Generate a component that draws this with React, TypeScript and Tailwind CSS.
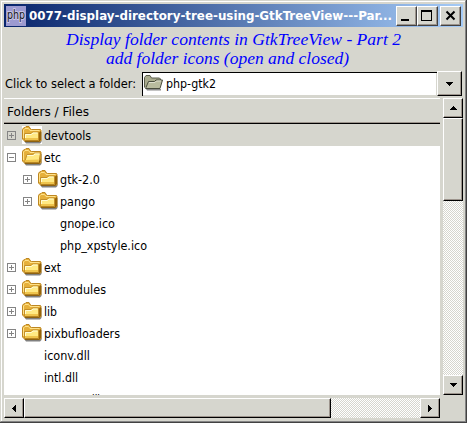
import React from "react";

const ui = "font-['DejaVu_Sans_Condensed','DejaVu_Sans',sans-serif]";

type Node = { name: string; depth: number; kind: "closed" | "open" | "file"; width: number };

const rows: Node[] = [
  { name: "devtools", depth: 0, kind: "closed", width: 47 },
  { name: "etc", depth: 0, kind: "open", width: 17 },
  { name: "gtk-2.0", depth: 1, kind: "closed", width: 40 },
  { name: "pango", depth: 1, kind: "closed", width: 35 },
  { name: "gnope.ico", depth: 1, kind: "file", width: 55 },
  { name: "php_xpstyle.ico", depth: 1, kind: "file", width: 87 },
  { name: "ext", depth: 0, kind: "closed", width: 17 },
  { name: "immodules", depth: 0, kind: "closed", width: 62 },
  { name: "lib", depth: 0, kind: "closed", width: 13 },
  { name: "pixbufloaders", depth: 0, kind: "closed", width: 76 },
  { name: "iconv.dll", depth: 0, kind: "file", width: 46 },
  { name: "intl.dll", depth: 0, kind: "file", width: 34 },
  { name: "msvcrun.dll", depth: 0, kind: "file", width: 56 },
];

/* Text fitted to a fixed advance width, drawn on a given baseline. */
function Label({ text, width, height, baseline, className }: { text: string; width: number; height: number; baseline: number; className: string }) {
  return (
    <svg width={width + 4} height={height} className="shrink-0 overflow-visible">
      <text x={0} y={baseline} textLength={width} lengthAdjust="spacingAndGlyphs" className={className}>{text}</text>
    </svg>
  );
}

function Folder({ open = false }: { open?: boolean }) {
  return (
    <svg width="20" height="18" viewBox="0 0 20 18" className="shrink-0">
      <path d="M2 15h17.500v1L18 17.500H4z" fill="#808080" />
      <path d="M19 6h1v9l-1 1z" fill="#b8b8b8" />
      <path d="M.5 3.500 1.500 2 3 1.500 4 .5h3L8.500 3l1 .5h9l.5 1v10l-1 1H3L.5 13z" fill="#e6b03a" stroke="#bd8722" />
      <path d="M1.500 12V4L3 2.500h3.500L8 4.500h9.500" fill="none" stroke="#ffe28a" />
      {open ? (
        <>
          <path d="m2.500 14.500 2.500-8 6-.2 1.500-1.300h6l-1.500 8.500-1 1z" fill="#ffe983" stroke="#c4902a" />
          <path d="m5 8 .5-.5h6l1.500-1.500h4.500" fill="none" stroke="#fffcd6" />
          <path d="m3.500 12 13-.500-.5 2.500H3z" fill="#efc44c" />
          <path d="m16.500 14.500 2-4v3.500l-1 1z" fill="#8b5c06" />
        </>
      ) : (
        <>
          <path d="M2.500 14.500v-7H9L10.500 6H16.500v8.500z" fill="#ffe983" stroke="#c48f28" />
          <path d="M3.500 13V8.500h6L11 7h4.500" fill="none" stroke="#fffcd6" />
          <path d="M3 12h13v2H3z" fill="#efc44c" />
          <path d="M17 6.500 19 5v9l-1 1h-1z" fill="#976408" />
        </>
      )}
      <path d="M3 15.300h14.500" stroke="#7c530b" strokeWidth=".9" />
    </svg>
  );
}

function Expander({ open }: { open: boolean }) {
  return (
    <svg width="9" height="9" shapeRendering="crispEdges" className="shrink-0">
      <path d="M.5.5h8v8h-8zM2 4.500h5" fill="none" stroke="#848484" />
      {!open && <path d="M4.500 2v5" stroke="#848484" />}
    </svg>
  );
}

const raised = "flex shrink-0 items-center justify-center border-t border-l border-r border-b border-t-white border-l-white border-r-black border-b-black bg-[#d6d6ce] shadow-[inset_-1px_-1px_0_#9c948c]";
const titleButton = "flex h-[20px] w-[21px] shrink-0 items-center justify-center border-t border-l border-r border-b border-t-white border-l-white border-r-[#424242] border-b-[#424242] bg-[#d6d6ce] shadow-[inset_-1px_-1px_0_#9c948c]";

function Arrow({ dir }: { dir: "up" | "down" | "left" | "right" }) {
  const d = {
    up: "M3 0h1v1h1v1h1v1h1v1H0V3h1V2h1V1h1z",
    down: "M0 0h7v1H6v1H5v1H4v1H3V3H2V2H1V1H0z",
    left: "M3 0h1v7H3V6H2V5H1V4H0V3h1V2h1V1h1z",
    right: "M0 0h1v1h1v1h1v1h1v1H3v1H2v1H1v1H0z",
  }[dir];
  const flat = dir === "up" || dir === "down";
  return <svg width={flat ? 7 : 4} height={flat ? 4 : 7} shapeRendering="crispEdges"><path d={d} /></svg>;
}

const track = "bg-[repeating-conic-gradient(#d6d6ce_0_25%,#fff_0_50%)] bg-[length:2px_2px]";
const heading = "fill-[#0000ff] font-['Liberation_Serif',serif] text-[17px] italic";

export default function App() {
  return (
    <div className={`${ui} flex h-[423px] w-[467px] flex-col overflow-hidden border-r border-b border-[#424242] bg-[#d6d6ce] text-black`}>
      <div className="flex h-[422px] w-[466px] flex-col border-t border-l border-r border-b border-t-[#d6d6ce] border-l-[#d6d6ce] border-r-[#848484] border-b-[#848484]">
        <div className="flex h-[420px] w-[464px] flex-col border-t border-l border-white pt-[2px] pl-[2px]">
          <header className="flex h-[23px] w-[459px] shrink-0 items-center bg-linear-to-r/srgb from-[#08246b] to-[#a5cbf7] pl-[2px]">
            <svg width="20" height="20" className="mr-[3px] shrink-0 overflow-visible">
              <path d="M0 0h20v20H0z" fill="#9c9ad0" />
              <text x="1" y="13" textLength="18" lengthAdjust="spacingAndGlyphs" stroke="#c9c6e8" strokeWidth="2" paintOrder="stroke" className="fill-[#181818] font-['DejaVu_Sans'] text-[12px]">php</text>
            </svg>
            <Label text="0077-display-directory-tree-using-GtkTreeView---Par..." width={363} height={20} baseline={14} className="fill-white text-[12px] font-bold" />
            <div className={titleButton}><svg width="15" height="14" shapeRendering="crispEdges"><path d="M2 10h8v2H2z" /></svg></div>
            <div className={titleButton}><svg width="15" height="14" shapeRendering="crispEdges"><path d="M1 1h11v11H1zM2 3v8h9V3z" fillRule="evenodd" /></svg></div>
            <div className={`${titleButton} ml-[2px]`}><svg width="15" height="14"><path d="m3.500 2.500 8 8m0-8-8 8" stroke="#000" strokeWidth="2" /></svg></div>
          </header>
          <div className="flex h-[44px] shrink-0 flex-col pt-[3px] pl-[62px]">
            <Label text="Display folder contents in GtkTreeView - Part 2" width={335} height={19} baseline={15} className={heading} />
            <div className="flex pl-[40px]">
              <Label text="add folder icons (open and closed)" width={243} height={19} baseline={15} className={heading} />
            </div>
          </div>
          <div className="flex h-[25px] shrink-0 pl-px">
            <div className="w-[137px] shrink-0"><Label text="Click to select a folder:" width={131} height={25} baseline={17} className="text-[12px]" /></div>
            <div className="mt-px flex h-[24px] w-[295px] shrink-0 items-start border-t border-l border-black bg-white shadow-[inset_-1px_-1px_0_#d6d6ce]">
              <svg width="23" height="20" className="shrink-0">
                <path d="M3 16h15v1.500H4z" fill="#8a8a8a" />
                <path d="M1.500 14.500v-10L3 2.500h4L8.500 5h8l1 1v3" fill="#a9ab8d" stroke="#5a5d4c" />
                <path d="m2.500 15.500 3-7h6L13 7h6.500l-2.500 8.500z" fill="#b9bb9e" stroke="#4a4d3e" />
                <path d="M6 9.500h6L13.500 8H18" fill="none" stroke="#dfe0cf" />
              </svg>
              <Label text="php-gtk2" width={50} height={22} baseline={15} className="text-[12px]" />
            </div>
            <div className={`${raised} h-[25px] w-[25px]`}><Arrow dir="down" /></div>
          </div>
          <main className="flex h-[299px] shrink-0 gap-[3px] pt-[2px]">
            <section className="h-[297px] w-[436px] overflow-hidden bg-white">
              <div className="flex h-[26px] border-t border-b border-t-white border-b-black bg-[#d6d6ce] pl-[3px] shadow-[inset_0_-1px_0_#9c948c]">
                <Label text="Folders / Files" width={82} height={24} baseline={17} className="text-[12px]" />
              </div>
              {rows.map((row, i) => (
                <div key={row.name} className={`flex h-[22px] items-center pl-[3px] ${i === 0 ? "bg-[#d6d6ce]" : ""}`}>
                  {row.depth === 1 && <span className="w-[16px] shrink-0" />}
                  <span className="flex w-[15px] shrink-0">{row.kind !== "file" && <Expander open={row.kind === "open"} />}</span>
                  <span className={`mr-[2px] flex w-[20px] shrink-0 ${i === 0 ? "bg-white" : ""}`}>{row.kind !== "file" && <Folder open={row.kind === "open"} />}</span>
                  <Label text={row.name} width={row.width} height={22} baseline={16} className="text-[12px]" />
                </div>
              ))}
            </section>
            <div className={`flex h-[297px] w-[20px] flex-col ${track}`}>
              <div className={`${raised} h-[20px]`}><Arrow dir="up" /></div>
              <div className={`${raised} h-[83px]`} />
              <div className="grow" />
              <div className={`${raised} h-[20px]`}><Arrow dir="down" /></div>
            </div>
          </main>
          <div className={`mt-[3px] flex h-[20px] w-[436px] shrink-0 ${track}`}>
            <div className={`${raised} w-[20px]`}><Arrow dir="left" /></div>
            <div className={`${raised} w-[307px]`} />
            <div className="grow" />
            <div className={`${raised} w-[20px]`}><Arrow dir="right" /></div>
          </div>
        </div>
      </div>
    </div>
  );
}
